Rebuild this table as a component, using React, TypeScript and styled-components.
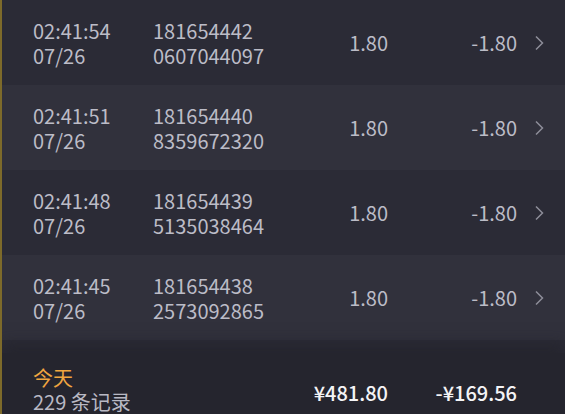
import React from "react";
import styled, { createGlobalStyle } from "styled-components";

const Global = createGlobalStyle`
  html, body { margin: 0; padding: 0; background: #2c2c37; overflow: hidden; height: 414px; }
  body { font-family: "Noto Sans CJK SC", "Noto Sans", sans-serif; }
`;

const Page = styled.div`
  width: 565px;
  height: 434px;
  display: flex;
  flex-direction: column;
  border-left: 2px solid #7d6a2a;
  box-sizing: border-box;
  overflow: hidden;
`;

const List = styled.div`
  flex: 1;
  min-height: 0;
  display: flex;
  flex-direction: column;
  overflow: hidden;
`;

const Row = styled.div<{ $alt: boolean }>`
  flex: 0 0 85px;
  display: grid;
  grid-template-columns: 120px 1fr 100px 129px 48px;
  align-items: center;
  padding-left: 31px;
  background: ${(p) => (p.$alt ? "#31313c" : "#2b2b36")};
  color: #bcbcc7;
  font-size: 20px;
  line-height: 25px;
`;

const Stack = styled.div`
  display: flex;
  flex-direction: column;
`;

const Num = styled.div`
  text-align: right;
`;

const Chevron = styled.div`
  display: flex;
  justify-content: flex-end;
  padding-right: 21px;
  color: #8d8d99;
`;

const Footer = styled.div`
  flex: 0 0 auto;
  display: grid;
  grid-template-columns: 1fr 100px 129px 48px;
  align-items: center;
  padding: 13px 0 20px 31px;
  background: #25252e;
  box-shadow: 0 -10px 14px rgba(32, 32, 40, 0.55);
  position: relative;
  font-size: 20px;
  line-height: 24px;
`;

const Today = styled.div`
  color: #f0a640;
`;

const Count = styled.div`
  color: #b9b9c4;
`;

const Total = styled.div`
  text-align: right;
  color: #f4f4f6;
  font-weight: 500;
  padding-top: 6px;
`;

const rows = [
  ["02:41:54", "07/26", "181654442", "0607044097"],
  ["02:41:51", "07/26", "181654440", "8359672320"],
  ["02:41:48", "07/26", "181654439", "5135038464"],
  ["02:41:45", "07/26", "181654438", "2573092865"],
  ["02:41:42", "07/26", "181654437", "1234567890"],
];

const Arrow = () => (
  <svg width="10" height="16" viewBox="0 0 10 16" fill="none">
    <path d="M2 1.5 L8.5 8 L2 14.5" stroke="currentColor" strokeWidth="1.5" />
  </svg>
);

export default function App() {
  return (
    <>
      <Global />
      <Page>
        <List>
          {rows.map((r, i) => (
            <Row key={i} $alt={i % 2 === 1}>
              <Stack>
                <span>{r[0]}</span>
                <span>{r[1]}</span>
              </Stack>
              <Stack>
                <span>{r[2]}</span>
                <span>{r[3]}</span>
              </Stack>
              <Num>1.80</Num>
              <Num>-1.80</Num>
              <Chevron>
                <Arrow />
              </Chevron>
            </Row>
          ))}
        </List>
        <Footer>
          <Stack>
            <Today>今天</Today>
            <Count>229 条记录</Count>
          </Stack>
          <Total>¥481.80</Total>
          <Total>-¥169.56</Total>
          <div />
        </Footer>
      </Page>
    </>
  );
}
